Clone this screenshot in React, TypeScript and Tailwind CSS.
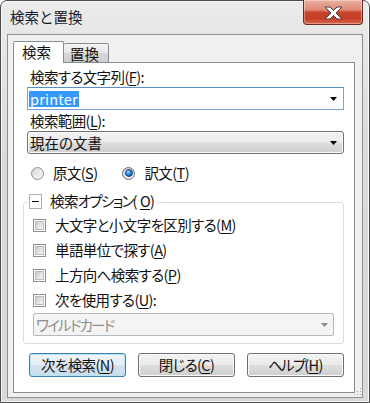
import React from "react";

function U({ children }: { children: React.ReactNode }) {
  return <span className="underline decoration-1 underline-offset-[2px]">{children}</span>;
}

// katakana runs in Meiryo UI are much narrower than in Noto
function K({ children }: { children: React.ReactNode }) {
  return <span className="tracking-[-1.8px]">{children}</span>;
}

function Arrow({ color = "#000" }: { color?: string }) {
  return (
    <svg width="7" height="4" viewBox="0 0 7 4" className="shrink-0">
      <polygon points="0,0 7,0 3.5,4" fill={color} />
    </svg>
  );
}

function CloseButton() {
  return (
    <div className="mr-[6px] -mt-[1px] flex h-[25px] w-[60px] items-center justify-center rounded-b-[4px] border border-t-0 border-[#6b2b22] bg-[linear-gradient(to_bottom,#eab0a2_0%,#e08a75_40%,#c9462d_52%,#c43c24_75%,#d9664d_100%)] shadow-[inset_0_0_0_1px_rgba(255,255,255,0.35)]">
      <svg width="19" height="14" viewBox="-1 -1 19 14" className="mt-[1px]">
        <polygon
          points="0,0 5,0 8.5,3.5 12,0 17,0 11,6 17,12 12,12 8.5,8.5 5,12 0,12 6,6"
          fill="#fff"
          stroke="#404040"
          strokeWidth="1"
          strokeLinejoin="round"
        />
      </svg>
    </div>
  );
}

function Radio({ checked, children }: { checked?: boolean; children: React.ReactNode }) {
  return (
    <div className="flex items-center gap-[9px]">
      <div
        className={
          "flex h-[13px] w-[13px] items-center justify-center rounded-full border bg-[linear-gradient(135deg,#d4d6d9,#f8f8f8)] " +
          (checked ? "border-[#5d6b78]" : "border-[#8e8f8f]")
        }
      >
        {checked && (
          <div className="h-[8px] w-[8px] rounded-full border border-[#0b3b6e] bg-[radial-gradient(circle_at_35%_30%,#a6dcff_0%,#2b8be0_45%,#0d4f95_100%)]" />
        )}
      </div>
      <span>{children}</span>
    </div>
  );
}

function Check({ children }: { children: React.ReactNode }) {
  return (
    <div className="flex h-[18px] items-center gap-[9px] pl-[9px]">
      <div className="flex h-[13px] w-[13px] items-center justify-center border border-[#8e8f8f] bg-white">
        <div className="h-[9px] w-[9px] border border-[#b9bcc0] bg-[linear-gradient(135deg,#c9cdd2,#f6f6f6)]" />
      </div>
      <span className="leading-[18px]">{children}</span>
    </div>
  );
}

function Btn({ primary, children }: { primary?: boolean; children: React.ReactNode }) {
  const look = primary
    ? "border-[#3c7fb1] bg-[linear-gradient(to_bottom,#eef5fa_0%,#e4eef6_48%,#d3e3ef_52%,#c9dceb_100%)] shadow-[inset_0_0_0_1px_#b8e2f9]"
    : "border-[#707070] bg-[linear-gradient(to_bottom,#f2f2f2_0%,#ebebeb_48%,#dddddd_52%,#cfcfcf_100%)] shadow-[inset_0_0_0_1px_#fbfbfb]";
  return (
    <div className={"flex h-[24px] w-[97px] items-center justify-center rounded-[3px] border leading-[18px] " + look}>
      {children}
    </div>
  );
}

export default function App() {
  return (
    <div className="h-[403px] w-[370px] font-['Noto_Sans_CJK_JP','Meiryo_UI',sans-serif] text-[14.5px] tracking-[-0.6px] text-[#111] [font-feature-settings:'palt']">
      <div className="flex h-full w-full flex-col rounded-t-[7px] border border-[#4d4d4d] bg-[linear-gradient(to_bottom,#ebebeb,#dadada_40%,#d9d9d9)] shadow-[inset_0_0_0_1px_#f6f6f6]">
        {/* title bar */}
        <div className="flex h-[33px] shrink-0 items-start justify-between">
          <span className="ml-[9px] mt-[7px] leading-[18px] tracking-normal text-[#141a2a] [font-feature-settings:normal]">検索と置換</span>
          <CloseButton />
        </div>

        {/* client area */}
        <div className="relative mx-[6px] mb-[4px] flex flex-1 flex-col border border-[#8f8f8f] bg-[#f0f0f0] pb-[4px] pl-[5px] pr-[7px] pt-[6px]">
          <div className="relative z-10 -mb-[1px] flex h-[22px] items-end">
            <div className="h-[22px] w-[51px] rounded-t-[2px] border border-b-0 border-[#898c95] bg-white pl-[8px] leading-[20px] tracking-normal">
              検索
            </div>
            <div className="h-[20px] w-[45px] rounded-t-[2px] border border-l-0 border-[#898c95] bg-[linear-gradient(to_bottom,#f3f3f3,#e6e6e6_50%,#d7d7d7_52%,#cfcfcf)] pl-[6px] leading-[20px] tracking-normal">
              置換
            </div>
          </div>

          {/* tab page */}
          <div className="flex flex-1 flex-col border border-[#898c95] bg-white pl-[9px] pr-[10px]">
            <div className="ml-[7px] mt-[5px] h-[18px] leading-[18px]">
              検索する文字列(<U>F</U>):
            </div>
            <div className="ml-[4px] mt-[1px] flex h-[23px] items-center justify-between border border-[#7da2ce] border-t-[#5b8ec4] bg-white pl-[1px] pr-[6px]">
              <span className="bg-[#3399ff] pl-[1px] pr-[1px] leading-[16px] tracking-[0.2px] text-white">printer</span>
              <Arrow />
            </div>

            <div className="ml-[7px] mt-[2px] h-[18px] leading-[18px]">
              検索範囲(<U>L</U>):
            </div>
            <div className="ml-[4px] mt-[1px] flex h-[23px] items-center justify-between rounded-[3px] border border-[#707070] bg-[linear-gradient(to_bottom,#f2f2f2_0%,#ebebeb_48%,#dddddd_52%,#cfcfcf_100%)] pl-[2px] pr-[6px] shadow-[inset_0_0_0_1px_#fbfbfb]">
              <span className="leading-[18px] tracking-normal">現在の文書</span>
              <Arrow />
            </div>

            <div className="ml-[8px] mt-[10px] flex h-[18px] items-center gap-[25px] leading-[18px]">
              <Radio>
                原文(<U>S</U>)
              </Radio>
              <Radio checked>
                訳文(<U>T</U>)
              </Radio>
            </div>

            {/* options group */}
            <div className="mt-[20px] flex flex-col rounded-[3px] border border-[#d5dfe5] pb-[7px]">
              <div className="-mt-[10px] ml-[4px] flex h-[16px] w-fit items-center gap-[8px] bg-white pl-[1px] pr-[3px]">
                <div className="flex h-[15px] w-[13px] items-center justify-center border border-[#a7b0ba] bg-white">
                  <div className="h-[1px] w-[7px] bg-black" />
                </div>
                <span className="leading-[16px]">
                  検索<K>オプション</K>(<span className="ml-[3px]"><U>O</U></span>)
                </span>
              </div>
              <div className="mt-[7px] flex flex-col gap-[7px]">
                <Check>
                  大文字と小文字を区別する(<U>M</U>)
                </Check>
                <Check>
                  単語単位で探す(<U>A</U>)
                </Check>
                <Check>
                  上方向へ検索する(<U>P</U>)
                </Check>
                <Check>
                  次を使用する(<U>U</U>):
                </Check>
              </div>
              <div className="ml-[9px] mr-[9px] mt-[4px] flex h-[23px] items-center justify-between rounded-[2px] border border-[#b4b9bd] bg-[#f4f4f4] pl-[2px] pr-[5px] text-[#8d8d8d]">
                <span className="leading-[18px] tracking-[-0.4px]">
                  <K>ワイルドカード</K>
                </span>
                <Arrow color="#8a8a8a" />
              </div>
            </div>

            <div className="ml-[6px] mt-[9px] flex gap-[12px]">
              <Btn primary>
                次を検索(<U>N</U>)
              </Btn>
              <Btn>
                閉じる(<U>C</U>)
              </Btn>
              <Btn>
                <K>ヘルプ</K>(<U>H</U>)
              </Btn>
            </div>
          </div>

          {/* size grip */}
          <svg width="8" height="8" viewBox="0 0 8 8" className="absolute bottom-[1px] right-[0px]">
            <rect x="6" y="0" width="1" height="1" fill="#a0a0a0" />
            <rect x="3" y="3" width="1" height="1" fill="#a0a0a0" />
            <rect x="6" y="3" width="1" height="1" fill="#a0a0a0" />
            <rect x="0" y="6" width="1" height="1" fill="#a0a0a0" />
            <rect x="3" y="6" width="1" height="1" fill="#a0a0a0" />
            <rect x="6" y="6" width="1" height="1" fill="#a0a0a0" />
          </svg>
        </div>
      </div>
    </div>
  );
}
